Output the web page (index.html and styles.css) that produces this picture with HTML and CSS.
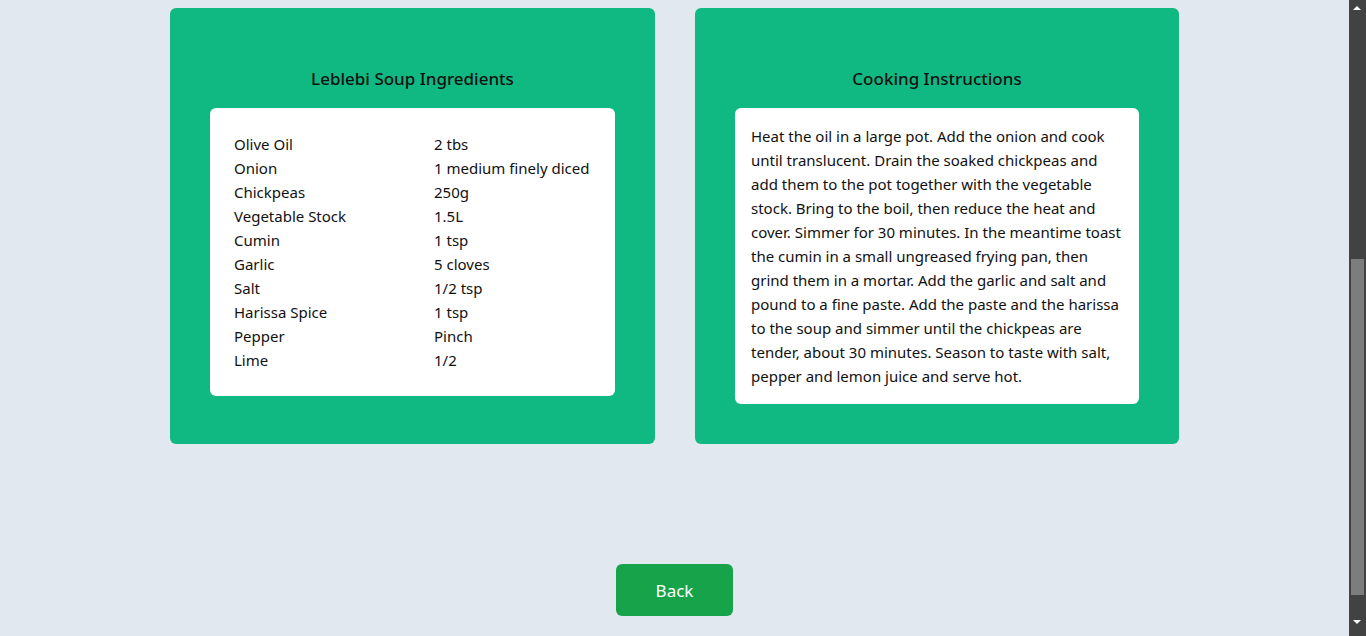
FILE: index.html
```html
<!DOCTYPE html>
<html lang="en">
<head>
<meta charset="utf-8">
<title>Leblebi Soup</title>
<link rel="stylesheet" href="styles.css">
</head>
<body>
<main class="page">
  <section class="cards">
    <article class="card">
      <h2 class="card-title">Leblebi Soup Ingredients</h2>
      <div class="panel panel-ingredients">
        <div class="ingredients">
          <span>Olive Oil</span><span>2 tbs</span>
          <span>Onion</span><span>1 medium finely diced</span>
          <span>Chickpeas</span><span>250g</span>
          <span>Vegetable Stock</span><span>1.5L</span>
          <span>Cumin</span><span>1 tsp</span>
          <span>Garlic</span><span>5 cloves</span>
          <span>Salt</span><span>1/2 tsp</span>
          <span>Harissa Spice</span><span>1 tsp</span>
          <span>Pepper</span><span>Pinch</span>
          <span>Lime</span><span>1/2</span>
        </div>
      </div>
    </article>
    <article class="card">
      <h2 class="card-title">Cooking Instructions</h2>
      <div class="panel panel-instructions">
        <p class="instructions">Heat the oil in a large pot. Add the onion and cook until translucent. Drain the soaked chickpeas and add them to the pot together with the vegetable stock. Bring to the boil, then reduce the heat and cover. Simmer for 30 minutes. In the meantime toast the cumin in a small ungreased frying pan, then grind them in a mortar. Add the garlic and salt and pound to a fine paste. Add the paste and the harissa to the soup and simmer until the chickpeas are tender, about 30 minutes. Season to taste with salt, pepper and lemon juice and serve hot.</p>
      </div>
    </article>
  </section>
  <button class="back" type="button">Back</button>
</main>
<div class="scrollbar" aria-hidden="true">
  <span class="arrow arrow-up"></span>
  <span class="thumb"></span>
  <span class="arrow arrow-down"></span>
</div>
</body>
</html>
```

FILE: styles.css
```css
* { box-sizing: border-box; }

html, body {
  margin: 0;
  height: 100%;
}

body {
  background: #e2e8f0;
  font-family: "Noto Sans", "Open Sans", "Liberation Sans", sans-serif;
  font-size: 15px;
  line-height: 24px;
  color: #111;
  overflow: hidden;
}

.page {
  width: calc(100% - 17px);
  display: flex;
  flex-direction: column;
  align-items: center;
  padding-top: 8px;
}

.cards {
  display: grid;
  grid-template-columns: 485px 484px;
  column-gap: 40px;
}

.card {
  background: #10b981;
  border-radius: 6px;
  padding: 40px;
  display: flex;
  flex-direction: column;
  align-items: stretch;
}

.card-title {
  margin: 17px 0 15px;
  font-size: 17px;
  line-height: 28px;
  font-weight: 500;
  text-align: center;
  color: #111;
}

.panel {
  background: #fff;
  border-radius: 6px;
}

.panel-ingredients {
  padding: 24px;
}

.ingredients {
  display: grid;
  grid-template-columns: 200px 1fr;
  white-space: nowrap;
}

.panel-instructions {
  padding: 16px;
}

.instructions {
  margin: 0;
}

.back {
  margin-top: 120px;
  width: 117px;
  height: 52px;
  border: 0;
  border-radius: 6px;
  background: #16a34a;
  color: #fff;
  font-family: inherit;
  font-size: 17px;
}

.scrollbar {
  position: fixed;
  top: 0;
  right: 0;
  width: 17px;
  height: 100%;
  background: #424242;
}

.thumb {
  position: absolute;
  left: 2px;
  right: 2px;
  top: 259px;
  height: 336px;
  background: #7d7d7d;
}

.arrow {
  position: absolute;
  left: 4px;
  width: 0;
  height: 0;
  border-left: 4.5px solid transparent;
  border-right: 4.5px solid transparent;
}

.arrow-up {
  top: 6px;
  border-bottom: 4px solid #fff;
}

.arrow-down {
  bottom: 12px;
  border-top: 4px solid #fff;
}
```
